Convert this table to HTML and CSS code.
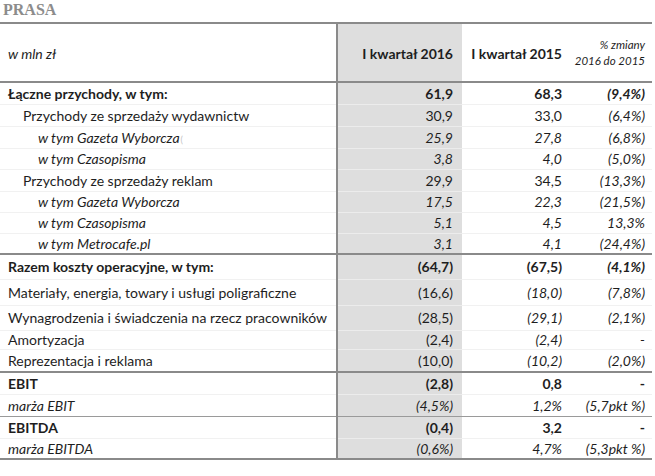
FILE: index.html
```html
<!DOCTYPE html>
<html lang="pl">
<head>
<meta charset="utf-8">
<title>PRASA</title>
<link rel="stylesheet" href="styles.css">
</head>
<body>
<div class="title">PRASA</div>
<table class="fin">
  <colgroup>
    <col class="c-label"><col class="c-2016"><col class="c-2015"><col class="c-chg">
  </colgroup>
  <thead>
    <tr class="head">
      <th class="lbl unit">w mln zł</th>
      <th class="v16">I kwartał 2016</th>
      <th class="v15">I kwartał 2015</th>
      <th class="chg small">% zmiany<br>2016 do 2015</th>
    </tr>
  </thead>
  <tbody class="grp">
    <tr class="r22 bold"><td class="lbl">Łączne przychody, w tym:</td><td class="v16">61,9</td><td class="v15">68,3</td><td class="chg it">(9,4%)</td></tr>
    <tr class="r22"><td class="lbl l1">Przychody ze sprzedaży wydawnictw</td><td class="v16">30,9</td><td class="v15">33,0</td><td class="chg it">(6,4%)</td></tr>
    <tr class="r22 it"><td class="lbl l2">w tym Gazeta Wyborcza<span class="mark">(</span></td><td class="v16">25,9</td><td class="v15">27,8</td><td class="chg">(6,8%)</td></tr>
    <tr class="r21 it"><td class="lbl l2">w tym Czasopisma</td><td class="v16">3,8</td><td class="v15">4,0</td><td class="chg">(5,0%)</td></tr>
    <tr class="r22"><td class="lbl l1">Przychody ze sprzedaży reklam</td><td class="v16">29,9</td><td class="v15">34,5</td><td class="chg it">(13,3%)</td></tr>
    <tr class="r21 it"><td class="lbl l2">w tym Gazeta Wyborcza</td><td class="v16">17,5</td><td class="v15">22,3</td><td class="chg">(21,5%)</td></tr>
    <tr class="r21 it"><td class="lbl l2">w tym Czasopisma</td><td class="v16">5,1</td><td class="v15">4,5</td><td class="chg">13,3%</td></tr>
    <tr class="r21 it"><td class="lbl l2">w tym Metrocafe.pl</td><td class="v16">3,1</td><td class="v15">4,1</td><td class="chg">(24,4%)</td></tr>
  </tbody>
  <tbody class="grp">
    <tr class="r25 bold"><td class="lbl">Razem koszty operacyjne, w tym:</td><td class="v16">(64,7)</td><td class="v15">(67,5)</td><td class="chg it">(4,1%)</td></tr>
    <tr class="r26"><td class="lbl">Materiały, energia, towary i usługi poligraficzne</td><td class="v16">(16,6)</td><td class="v15 it">(18,0)</td><td class="chg it">(7,8%)</td></tr>
    <tr class="r25"><td class="lbl">Wynagrodzenia i świadczenia na rzecz pracowników</td><td class="v16">(28,5)</td><td class="v15 it">(29,1)</td><td class="chg it">(2,1%)</td></tr>
    <tr class="r19"><td class="lbl">Amortyzacja</td><td class="v16">(2,4)</td><td class="v15 it">(2,4)</td><td class="chg it">-</td></tr>
    <tr class="r23"><td class="lbl">Reprezentacja i reklama</td><td class="v16">(10,0)</td><td class="v15 it">(10,2)</td><td class="chg it">(2,0%)</td></tr>
  </tbody>
  <tbody class="grp thin">
    <tr class="r22 bold"><td class="lbl">EBIT</td><td class="v16">(2,8)</td><td class="v15">0,8</td><td class="chg">-</td></tr>
    <tr class="r22 it"><td class="lbl">marża EBIT</td><td class="v16">(4,5%)</td><td class="v15">1,2%</td><td class="chg">(5,7pkt %)</td></tr>
  </tbody>
  <tbody class="grp">
    <tr class="r22 bold"><td class="lbl">EBITDA</td><td class="v16">(0,4)</td><td class="v15">3,2</td><td class="chg">-</td></tr>
    <tr class="r21 it"><td class="lbl">marża EBITDA</td><td class="v16">(0,6%)</td><td class="v15">4,7%</td><td class="chg">(5,3pkt %)</td></tr>
  </tbody>
</table>
</body>
</html>
```
FILE: styles.css
```css
html, body {
  margin: 0;
  padding: 0;
  background: #ffffff;
}

body {
  font-family: "Lato", "Open Sans", "Liberation Sans", sans-serif;
  font-size: 14px;
  color: #1e1e1e;
}

.title {
  font-family: "Liberation Serif", "DejaVu Serif", serif;
  font-weight: bold;
  font-size: 16px;
  color: #8c8c8c;
  padding: 1px 0 0 3px;
  height: 21px;
  line-height: 18px;
}

.fin {
  width: 652px;
  border-collapse: collapse;
  table-layout: fixed;
  border-top: 2px solid #8a8a8a;
}

.c-label { width: 337px; }
.c-2016 { width: 125px; }
.c-2015 { width: 109px; }
.c-chg { width: 81px; }

th, td {
  padding: 0;
  white-space: nowrap;
  vertical-align: middle;
}

.grp {
  border-bottom: 2px solid #8a8a8a;
}

.grp.thin {
  border-bottom: 1px solid #9a9a9a;
}

.grp tr + tr td {
  border-top: 1px solid #f1f1f1;
}

.grp tr + tr td.v16 {
  border-top: 1px solid #ececec;
}

.head {
  height: 59px;
  border-bottom: 2px solid #8a8a8a;
}

.head th {
  font-weight: bold;
}

.lbl {
  text-align: left;
  padding-left: 8px;
  border-right: 2px solid #8a8a8a;
}

.head .unit {
  font-weight: normal;
  font-style: italic;
  padding-top: 2px;
}

.lbl.l1 { padding-left: 23px; }
.lbl.l2 { padding-left: 38px; }

.v16 {
  background: #dedede;
  text-align: right;
  padding-right: 9px;
}

.v15 {
  text-align: right;
  padding-right: 9px;
}

.chg {
  text-align: right;
  padding-right: 7px;
}

.head .v16, .head .v15 { padding-top: 2px; }

.head .small {
  font-size: 11.5px;
  font-style: italic;
  font-weight: normal;
  line-height: 16px;
  padding-top: 1px;
}

.bold { font-weight: bold; }
.it, .it td { font-style: italic; }

.mark {
  color: #c4c4c4;
  font-style: normal;
  font-size: 9px;
  padding-left: 1px;
}

.r19 { height: 19px; }
.r21 { height: 21px; }
.r22 { height: 22px; }
.r23 { height: 23px; }
.r24 { height: 24px; }
.r25 { height: 25px; }
.r26 { height: 26px; }
```
